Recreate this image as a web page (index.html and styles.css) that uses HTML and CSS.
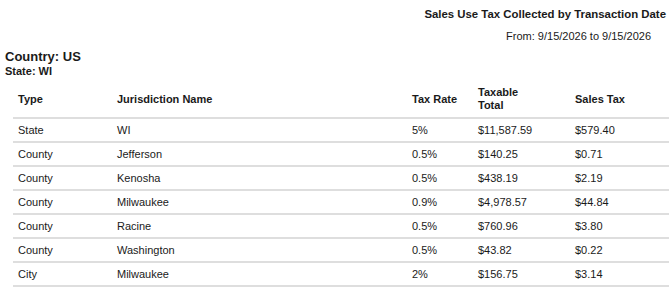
FILE: index.html
```html
<!DOCTYPE html>
<html>
<head>
<meta charset="utf-8">
<link rel="stylesheet" href="styles.css">
</head>
<body>
<div class="report">
  <div class="report-head">
    <div class="title">Sales Use Tax Collected by Transaction Date</div>
    <div class="range">From: 9/15/2026 to 9/15/2026</div>
  </div>
  <div class="country">Country: US</div>
  <div class="state">State: WI</div>
  <table class="tax-table">
    <colgroup>
      <col class="c-type"><col class="c-jur"><col class="c-rate"><col class="c-total"><col class="c-tax">
    </colgroup>
    <thead>
      <tr><th>Type</th><th>Jurisdiction Name</th><th>Tax Rate</th><th>Taxable<br>Total</th><th>Sales Tax</th></tr>
    </thead>
    <tbody>
      <tr><td>State</td><td>WI</td><td>5%</td><td>$11,587.59</td><td>$579.40</td></tr>
      <tr><td>County</td><td>Jefferson</td><td>0.5%</td><td>$140.25</td><td>$0.71</td></tr>
      <tr><td>County</td><td>Kenosha</td><td>0.5%</td><td>$438.19</td><td>$2.19</td></tr>
      <tr><td>County</td><td>Milwaukee</td><td>0.9%</td><td>$4,978.57</td><td>$44.84</td></tr>
      <tr><td>County</td><td>Racine</td><td>0.5%</td><td>$760.96</td><td>$3.80</td></tr>
      <tr><td>County</td><td>Washington</td><td>0.5%</td><td>$43.82</td><td>$0.22</td></tr>
      <tr><td>City</td><td>Milwaukee</td><td>2%</td><td>$156.75</td><td>$3.14</td></tr>
    </tbody>
  </table>
</div>
</body>
</html>
```
FILE: styles.css
```css
html, body {
  margin: 0;
  padding: 0;
  background: #fff;
}
body {
  font-family: "Liberation Sans", Arial, sans-serif;
  color: #1a1a1a;
}
.report {
  padding: 7px 1px 0 5px;
}
.report-head {
  display: flex;
  flex-direction: column;
  align-items: flex-end;
}
.title {
  font-weight: bold;
  font-size: 11.4px;
  line-height: 14px;
  padding-right: 3px;
}
.range {
  font-size: 11px;
  line-height: 14px;
  margin-top: 8px;
  padding-right: 18px;
}
.country {
  font-weight: bold;
  font-size: 13px;
  line-height: 15px;
  margin-top: 6px;
}
.state {
  font-weight: bold;
  font-size: 11px;
  line-height: 12px;
  margin-top: 1px;
}
.tax-table {
  margin: 4px 0 0 8px;
  width: 656px;
  border-collapse: separate;
  border-spacing: 0;
  font-size: 11px;
  table-layout: fixed;
}
.c-type { width: 99px; }
.c-jur { width: 295px; }
.c-rate { width: 66px; }
.c-total { width: 97px; }
.c-tax { width: 99px; }
.tax-table th {
  text-align: left;
  font-weight: bold;
  padding: 5px 5px;
  line-height: 13px;
  vertical-align: middle;
  border-bottom: 2px solid #dedede;
}
.tax-table td {
  padding: 4px 5px;
  line-height: 14px;
  vertical-align: middle;
  border-bottom: 2px solid #dedede;
}
```
